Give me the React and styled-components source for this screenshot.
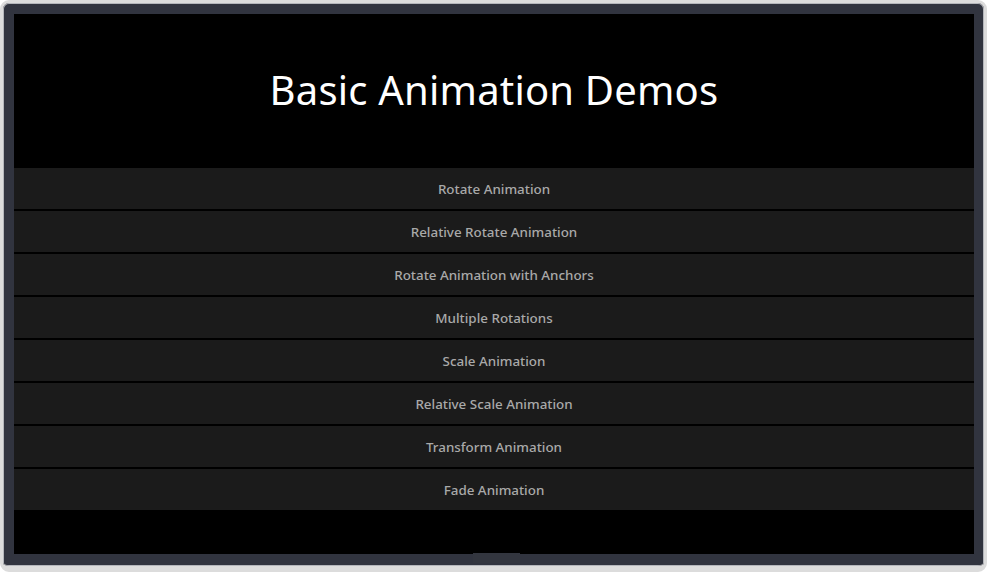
import styled, { createGlobalStyle } from "styled-components";

const Global = createGlobalStyle`
  html, body {
    margin: 0;
    padding: 0;
    background: #ffffff;
  }
  body {
    font-family: "Noto Sans", "Open Sans", sans-serif;
  }
`;

const Device = styled.div`
  box-sizing: border-box;
  width: 987px;
  height: 572px;
  padding: 11px 10px 12px 11px;
  background: #31343f;
  border: 3px solid #dcdcdc;
  border-bottom-width: 6px;
  border-radius: 9px;
  box-shadow: inset 0 0 0 1px #b4b6bb;
  position: relative;
`;

const HomeKey = styled.div`
  position: absolute;
  left: 470px;
  bottom: 3px;
  width: 47px;
  height: 10px;
  background: #33363f;
`;

const Screen = styled.div`
  width: 960px;
  height: 540px;
  background: #000;
  display: flex;
  flex-direction: column;
`;

const Header = styled.header`
  height: 154px;
  display: flex;
  align-items: center;
  justify-content: center;
`;

const Title = styled.h1`
  margin: 0;
  padding-bottom: 4px;
  font-size: 40px;
  font-weight: 400;
  color: #ffffff;
  letter-spacing: 0.2px;
`;

const List = styled.ul`
  list-style: none;
  margin: 0;
  padding: 0;
  display: flex;
  flex-direction: column;
  gap: 2px;
`;

const Item = styled.li`
  height: 41px;
  background: #1b1b1b;
  color: #a9a9a9;
  font-size: 13.4px;
  font-weight: 500;
  display: flex;
  align-items: center;
  justify-content: center;
`;

const demos = [
  "Rotate Animation",
  "Relative Rotate Animation",
  "Rotate Animation with Anchors",
  "Multiple Rotations",
  "Scale Animation",
  "Relative Scale Animation",
  "Transform Animation",
  "Fade Animation",
];

const App = () => {
  return (
    <>
      <Global />
      <Device>
        <Screen>
          <Header>
            <Title>Basic Animation Demos</Title>
          </Header>
          <List>
            {demos.map((name) => (
              <Item key={name}>{name}</Item>
            ))}
          </List>
        </Screen>
        <HomeKey />
      </Device>
    </>
  );
};

export default App;
